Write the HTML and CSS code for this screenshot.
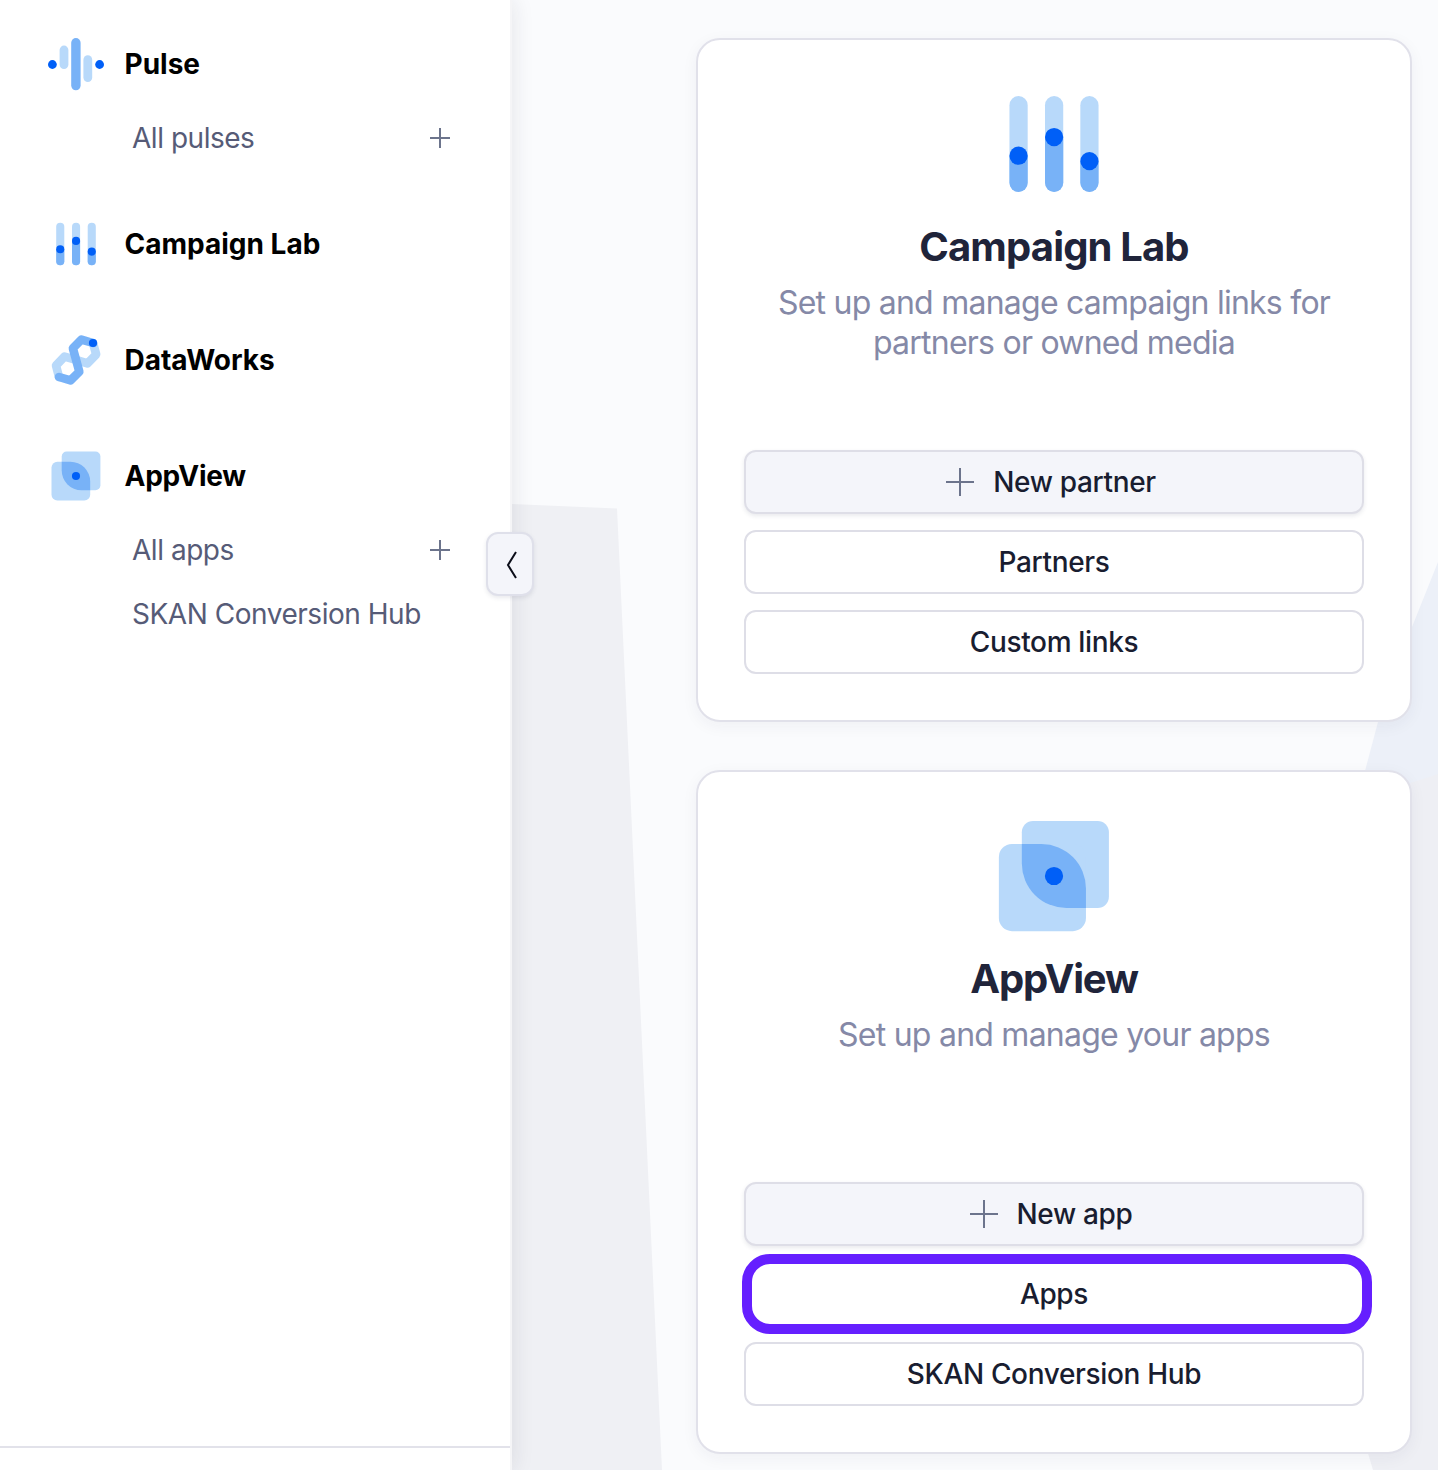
FILE: index.html
```html
<!DOCTYPE html>
<html lang="en">
<head>
<meta charset="utf-8">
<title>Home</title>
<link rel="stylesheet" href="styles.css">
</head>
<body>
<svg class="defs" aria-hidden="true">
  <symbol id="pulse" viewBox="0 0 56 56">
    <g fill="#b8d9fa"><rect x="11.6" y="9.6" width="8.8" height="23.4" rx="4.4"/><rect x="35.4" y="19.3" width="8.8" height="26.7" rx="4.4"/></g>
    <rect x="23.2" y="2" width="9.4" height="52.3" rx="4.7" fill="#78b2f7"/>
    <g fill="#005ff7"><circle cx="4.4" cy="28.5" r="4.4"/><circle cx="51.6" cy="28.5" r="4.4"/></g>
  </symbol>
  <symbol id="campaign" viewBox="0 0 56 56">
    <g fill="#b8d9fa"><rect x="8.2" y="6.7" width="8.1" height="42.6" rx="4.05"/><rect x="24" y="6.7" width="8.1" height="42.6" rx="4.05"/><rect x="39.7" y="6.7" width="8.1" height="42.6" rx="4.05"/></g>
    <g fill="#78b2f7"><path d="M8.2 33.2h8.1v12.05a4.05 4.05 0 0 1-8.1 0z"/><path d="M24 24.9h8.1v20.35a4.05 4.05 0 0 1-8.1 0z"/><path d="M39.7 35.6h8.1v9.65a4.05 4.05 0 0 1-8.1 0z"/></g>
    <g fill="#005ff7"><circle cx="12.25" cy="33.2" r="4.05"/><circle cx="28.05" cy="24.9" r="4.05"/><circle cx="43.75" cy="35.6" r="4.05"/></g>
  </symbol>
  <symbol id="dataworks" viewBox="0 0 56 56">
    <g fill="none" stroke-width="8.6" stroke-linejoin="round" stroke-linecap="round">
      <path stroke="#b8d9fa" d="M11 45 8 33.5 16.6 24.6 28 27.8 39.4 31.4 48.2 22.5 45 11"/>
      <path stroke="#78b2f7" d="M45 11 33.5 7.6 24.9 16.3 31.3 39.7 22.5 48.4 11 45"/>
    </g>
    <circle cx="45" cy="11" r="4.1" fill="#005ff7"/>
  </symbol>
  <symbol id="appview" viewBox="0 0 56 56">
    <g fill="#b8d9fa"><rect x="13.7" y="3.5" width="38.7" height="38.7" rx="5"/><rect x="3.5" y="13.8" width="38.7" height="38.7" rx="5.8"/></g>
    <path fill="#78b2f7" d="M13.7 13.8H22.4A19.8 19.8 0 0 1 42.2 33.6V42.2H33.5A19.8 19.8 0 0 1 13.7 22.4Z"/>
    <circle cx="28" cy="28" r="4.05" fill="#005ff7"/>
  </symbol>
  <symbol id="plus" viewBox="0 0 28 28"><path d="M14 0v28M0 14h28" stroke="#6c748c" stroke-width="2" fill="none"/></symbol>
  <symbol id="plus-small" viewBox="0 0 20 20"><path d="M10 0v20M0 10h20" stroke="#6c748c" stroke-width="2" fill="none"/></symbol>
</svg>

<div class="app">
  <aside class="sidebar">
    <nav class="nav">
      <section class="group">
        <a class="group-head"><svg class="nav-icon"><use href="#pulse"/></svg>Pulse</a>
        <a class="sub"><span>All pulses</span><svg class="add"><use href="#plus-small"/></svg></a>
      </section>
      <section class="group">
        <a class="group-head"><svg class="nav-icon"><use href="#campaign"/></svg>Campaign Lab</a>
      </section>
      <section class="group">
        <a class="group-head"><svg class="nav-icon"><use href="#dataworks"/></svg>DataWorks</a>
      </section>
      <section class="group">
        <a class="group-head tight"><svg class="nav-icon"><use href="#appview"/></svg>AppView</a>
        <a class="sub"><span>All apps</span><svg class="add"><use href="#plus-small"/></svg></a>
        <a class="sub"><span>SKAN Conversion Hub</span></a>
      </section>
    </nav>
    <div class="sidebar-footer"></div>
    <button class="collapse" aria-label="Collapse"><svg width="12" height="28" viewBox="0 0 12 28"><path d="M10 1 2 14l8 13" fill="none" stroke="#0b0d18" stroke-width="2"/></svg></button>
  </aside>

  <main class="content">
    <svg class="backdrop" viewBox="0 0 926 1470" aria-hidden="true">
      <path fill="#eff0f4" d="M0 504 105 508.5 150 1470H0z"/>
      <path fill="#ecf0f8" d="M926 562 900 627 866 722 840 820H926z"/>
      <path fill="#eeeff4" d="M840 802 926 774V1470H861L840 1400z"/>
    </svg>
    <article class="card">
      <svg class="card-icon"><use href="#campaign"/></svg>
      <h2>Campaign Lab</h2>
      <p>Set up and manage campaign links for partners or owned media</p>
      <div class="actions">
        <button class="btn primary"><svg class="btn-plus"><use href="#plus"/></svg><span>New partner</span></button>
        <button class="btn"><span>Partners</span></button>
        <button class="btn"><span>Custom links</span></button>
      </div>
    </article>
    <article class="card">
      <svg class="card-icon"><use href="#appview"/></svg>
      <h2 class="tight">AppView</h2>
      <p>Set up and manage your apps</p>
      <div class="actions">
        <button class="btn primary"><svg class="btn-plus"><use href="#plus"/></svg><span>New app</span></button>
        <button class="btn highlighted"><span>Apps</span></button>
        <button class="btn"><span>SKAN Conversion Hub</span></button>
      </div>
    </article>
  </main>
</div>
</body>
</html>
```
FILE: styles.css
```css
* { box-sizing: border-box; }
body {
  margin: 0;
  font-family: Inter, "Liberation Sans", sans-serif;
  background: #fafbfd;
  overflow: hidden;
}
.defs { position: absolute; width: 0; height: 0; }
.app { display: flex; height: 1470px; }

/* Sidebar */
.sidebar {
  position: relative;
  z-index: 1;
  flex: 0 0 512px;
  display: flex;
  flex-direction: column;
  background: #fff;
  border-right: 2px solid #f5f5f7;
  box-shadow: 2px 0 20px rgba(30, 35, 60, .09);
}
.nav { flex: 1; display: flex; flex-direction: column; gap: 32px; padding: 22px 60px 0 48px; }
.group { display: flex; flex-direction: column; }
.group-head {
  display: flex;
  align-items: center;
  gap: 20.5px;
  height: 84px;
  font-size: 28px;
  font-weight: 700;
  color: #000;
}
.group-head.tight { letter-spacing: -.25px; }
.nav-icon { width: 56px; height: 56px; }
.sub {
  display: flex;
  align-items: center;
  justify-content: space-between;
  height: 64px;
  padding-left: 84px;
  font-size: 28px;
  letter-spacing: -.47px;
  color: #565b77;
}
.add { width: 20px; height: 20px; }
.sidebar-footer { height: 24px; border-top: 2px solid #e2e2ea; }
.collapse {
  position: absolute;
  left: 486px;
  top: 532px;
  width: 48px;
  height: 64px;
  display: flex;
  align-items: center;
  justify-content: center;
  padding: 2px 0 0 3px;
  border: 2px solid #dfe0ea;
  border-radius: 12px;
  background: #f4f5fa;
  box-shadow: 0 2px 4px rgba(40, 45, 80, .1);
}

/* Content */
.content {
  position: relative;
  flex: 1;
  display: flex;
  flex-direction: column;
  gap: 48px;
  padding: 38px 26px 0 184px;
}
.backdrop { position: absolute; inset: 0; width: 926px; height: 1470px; }
.card {
  position: relative;
  flex: 0 0 684px;
  display: flex;
  flex-direction: column;
  align-items: center;
  padding: 41px 46px 46px;
  border: 2px solid #e1e1ea;
  border-radius: 24px;
  background: #fff;
  box-shadow: 0 4px 16px rgba(40, 45, 80, .05);
}
.card-icon { width: 126px; height: 126px; }
.card h2 {
  margin: 16px 0 12px;
  font-size: 40px;
  line-height: 48px;
  font-weight: 700;
  letter-spacing: -.85px;
  color: #20243a;
}
.card h2.tight { letter-spacing: -1.2px; }
.card p {
  margin: 0;
  width: 600px;
  font-size: 32px;
  line-height: 40px;
  letter-spacing: -.76px;
  text-align: center;
  color: #8589a7;
}
.actions { width: 100%; margin-top: auto; display: flex; flex-direction: column; gap: 16px; }
.btn {
  display: flex;
  align-items: center;
  justify-content: center;
  gap: 19px;
  height: 64px;
  padding: 0;
  border: 2px solid #dedee7;
  border-radius: 12px;
  background: #fff;
  font: 500 28px Inter, "Liberation Sans", sans-serif;
  letter-spacing: -.34px;
  color: #191d30;
}
.btn.primary { background: #f4f5fa; box-shadow: 0 2px 4px rgba(40, 45, 80, .1); padding-right: 6px; }
.btn-plus { width: 28px; height: 28px; }
.btn.highlighted {
  height: 80px;
  margin: -8px -8px -8px -2px;
  padding-right: 6px;
  border: 10px solid #651fff;
  border-radius: 28px;
}
```
